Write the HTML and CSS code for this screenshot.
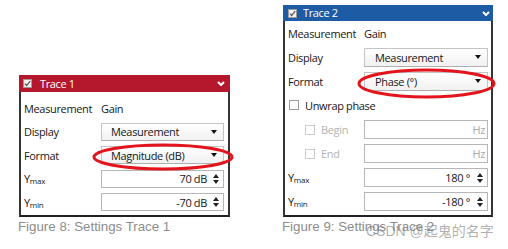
FILE: index.html
```html
<!DOCTYPE html>
<html>
<head>
<meta charset="utf-8">
<link rel="stylesheet" href="styles.css">
</head>
<body>
<div class="page">
  <div class="col col1">
    <div class="panel p1">
      <div class="hdr red">
        <svg class="hchk" width="9" height="9" viewBox="0 0 9 9"><rect x="0.5" y="0.5" width="8" height="8" fill="#f2f2f2" stroke="#9a9a9a"/><polyline points="1.8,4.6 3.7,6.5 7.2,2.2" fill="none" stroke="#555" stroke-width="1.2"/></svg>
        <span class="htitle">Trace 1</span>
        <svg class="chev" width="8" height="5" viewBox="0 0 8 5"><polyline points="1,1 4,4 7,1" fill="none" stroke="#fff" stroke-width="2"/></svg>
      </div>
      <div class="body">
        <span class="lbl">Measurement</span><span class="val">Gain</span>
        <span class="lbl">Display</span><div class="dd"><span>Measurement</span><i class="tri"></i></div>
        <span class="lbl">Format</span><div class="dd"><span>Magnitude (dB)</span><i class="tri"></i></div>
        <span class="lbl">Y<sub>max</sub></span><div class="inp"><span>70 dB</span><i class="spin"><i class="up"></i><i class="dn"></i></i></div>
        <span class="lbl">Y<sub>min</sub></span><div class="inp"><span>-70 dB</span><i class="spin"><i class="up"></i><i class="dn"></i></i></div>
      </div>
    </div>
    <div class="cap">Figure 8: Settings Trace 1</div>
  </div>
  <div class="col col2">
    <div class="panel p2">
      <div class="hdr blue">
        <svg class="hchk" width="9" height="9" viewBox="0 0 9 9"><rect x="0.5" y="0.5" width="8" height="8" fill="#f2f2f2" stroke="#9a9a9a"/><polyline points="1.8,4.6 3.7,6.5 7.2,2.2" fill="none" stroke="#555" stroke-width="1.2"/></svg>
        <span class="htitle">Trace 2</span>
        <svg class="chev" width="8" height="5" viewBox="0 0 8 5"><polyline points="1,1 4,4 7,1" fill="none" stroke="#fff" stroke-width="2"/></svg>
      </div>
      <div class="body">
        <span class="lbl">Measurement</span><span class="val">Gain</span>
        <span class="lbl">Display</span><div class="dd"><span>Measurement</span><i class="tri"></i></div>
        <span class="lbl">Format</span><div class="dd"><span>Phase (°)</span><i class="tri"></i></div>
        <span class="lbl full"><i class="cb"></i>Unwrap phase</span>
        <span class="lbl sub dis"><i class="cb off"></i>Begin</span><div class="inp hz"><span>Hz</span></div>
        <span class="lbl sub dis"><i class="cb off"></i>End</span><div class="inp hz"><span>Hz</span></div>
        <span class="lbl">Y<sub>max</sub></span><div class="inp"><span>180 °</span><i class="spin"><i class="up"></i><i class="dn"></i></i></div>
        <span class="lbl">Y<sub>min</sub></span><div class="inp"><span>-180 °</span><i class="spin"><i class="up"></i><i class="dn"></i></i></div>
      </div>
    </div>
    <div class="cap">Figure 9: Settings Trace 2</div>
  </div>
  <svg class="ring ring1" width="142" height="28" viewBox="0 0 142 28"><ellipse cx="71" cy="14" rx="69" ry="12" fill="none" stroke="#e3141b" stroke-width="3"/></svg>
  <svg class="ring ring2" width="139" height="31" viewBox="0 0 139 31"><ellipse cx="69.5" cy="15.5" rx="67.5" ry="13.5" fill="none" stroke="#e3141b" stroke-width="3"/></svg>
  <div class="wm">CSDN @起鬼的名字</div>
</div>
</body>
</html>
```

FILE: styles.css
```css
html, body {
  margin: 0;
  padding: 0;
  background: #fff;
}

.page {
  position: relative;
  width: 508px;
  height: 249px;
  display: flex;
  align-items: flex-start;
  padding-left: 19px;
  box-sizing: border-box;
  font-family: "Open Sans", "Noto Sans", sans-serif;
  font-size: 11px;
  letter-spacing: -0.35px;
  color: #161616;
}

.col {
  display: flex;
  flex-direction: column;
}

.col1 {
  width: 211px;
  margin-top: 75px;
}

.col2 {
  width: 210px;
  margin-top: 5px;
  margin-left: 53px;
}

.panel {
  display: flex;
  flex-direction: column;
}

.hdr {
  display: flex;
  align-items: center;
  color: #fff;
  line-height: 14px;
}

.red {
  background: #b5172d;
  height: 17px;
  padding: 0 5px 0 4px;
}

.blue {
  background: #1d5ca4;
  height: 16px;
  padding: 0 3px 0 5px;
}

.hchk {
  flex: none;
  display: block;
}

.p1 .htitle {
  margin-left: 8px;
  flex: 1;
}

.p2 .htitle {
  margin-left: 6px;
  flex: 1;
}

.chev {
  display: block;
  flex: none;
}

.body {
  display: grid;
  align-items: center;
  border: 2px solid #353535;
  border-top: none;
  border-bottom-color: #222;
}

.p1 .body {
  grid-template-columns: 77px 123px;
  grid-auto-rows: 18px;
  row-gap: 5.5px;
  padding: 7px 4px 4px 3px;
}

.p2 .body {
  grid-template-columns: 76px 124px;
  grid-auto-rows: 19px;
  row-gap: 5.15px;
  padding: 2.5px 3px 4px 3px;
}

.lbl {
  white-space: nowrap;
  display: flex;
  align-items: center;
}

.lbl sub {
  font-size: 8px;
  letter-spacing: -0.2px;
  vertical-align: baseline;
  position: relative;
  top: 2px;
}

.val {
  padding-left: 0;
}

.full {
  grid-column: 1 / 3;
  padding-left: 1px;
}

.sub {
  padding-left: 17px;
}

.dis {
  color: #b4b4b4;
}

.cb {
  display: inline-block;
  width: 8px;
  height: 8px;
  border: 1px solid #9c9c9c;
  background: #fff;
  margin-right: 6px;
  flex: none;
}

.cb.off {
  border-color: #cacaca;
}

.dd, .inp {
  height: 100%;
  box-sizing: border-box;
  display: flex;
  align-items: center;
}

.dd {
  border: 1px solid #c4c4c4;
  border-bottom-color: #b0b0b0;
  background: linear-gradient(#ffffff, #f1f1f1);
  padding: 0 6px 0 9px;
  justify-content: space-between;
}

.p2 .dd {
  padding-left: 10px;
}

.tri {
  width: 0;
  height: 0;
  border-left: 3px solid transparent;
  border-right: 3px solid transparent;
  border-top: 4px solid #111;
}

.inp {
  border: 1px solid #b6b6b6;
  background: #fff;
  justify-content: flex-end;
  padding-right: 4px;
}

.spin {
  display: flex;
  flex-direction: column;
  gap: 2px;
  margin-left: 6px;
}

.p2 .spin {
  margin-left: 7px;
}

.up {
  width: 0;
  height: 0;
  border-left: 3px solid transparent;
  border-right: 3px solid transparent;
  border-bottom: 4px solid #222;
}

.dn {
  width: 0;
  height: 0;
  border-left: 3px solid transparent;
  border-right: 3px solid transparent;
  border-top: 4px solid #222;
}

.hz {
  color: #a8a8a8;
  padding-right: 2px;
}

.cap {
  margin-top: 2px;
  margin-left: -1px;
  font-family: "Liberation Sans", Arial, sans-serif;
  font-size: 13.3px;
  letter-spacing: 0;
  line-height: 16px;
  color: #8c8c8c;
  white-space: nowrap;
}

.ring {
  position: absolute;
  display: block;
}

.ring1 {
  left: 91.5px;
  top: 142.5px;
}

.ring2 {
  left: 356.5px;
  top: 67.5px;
}

.wm {
  position: absolute;
  left: 366px;
  top: 223px;
  font-family: "Liberation Sans", "Noto Sans CJK SC", sans-serif;
  font-size: 14px;
  line-height: 16px;
  letter-spacing: 0;
  color: rgba(110, 110, 110, 0.55);
  white-space: nowrap;
}
```
